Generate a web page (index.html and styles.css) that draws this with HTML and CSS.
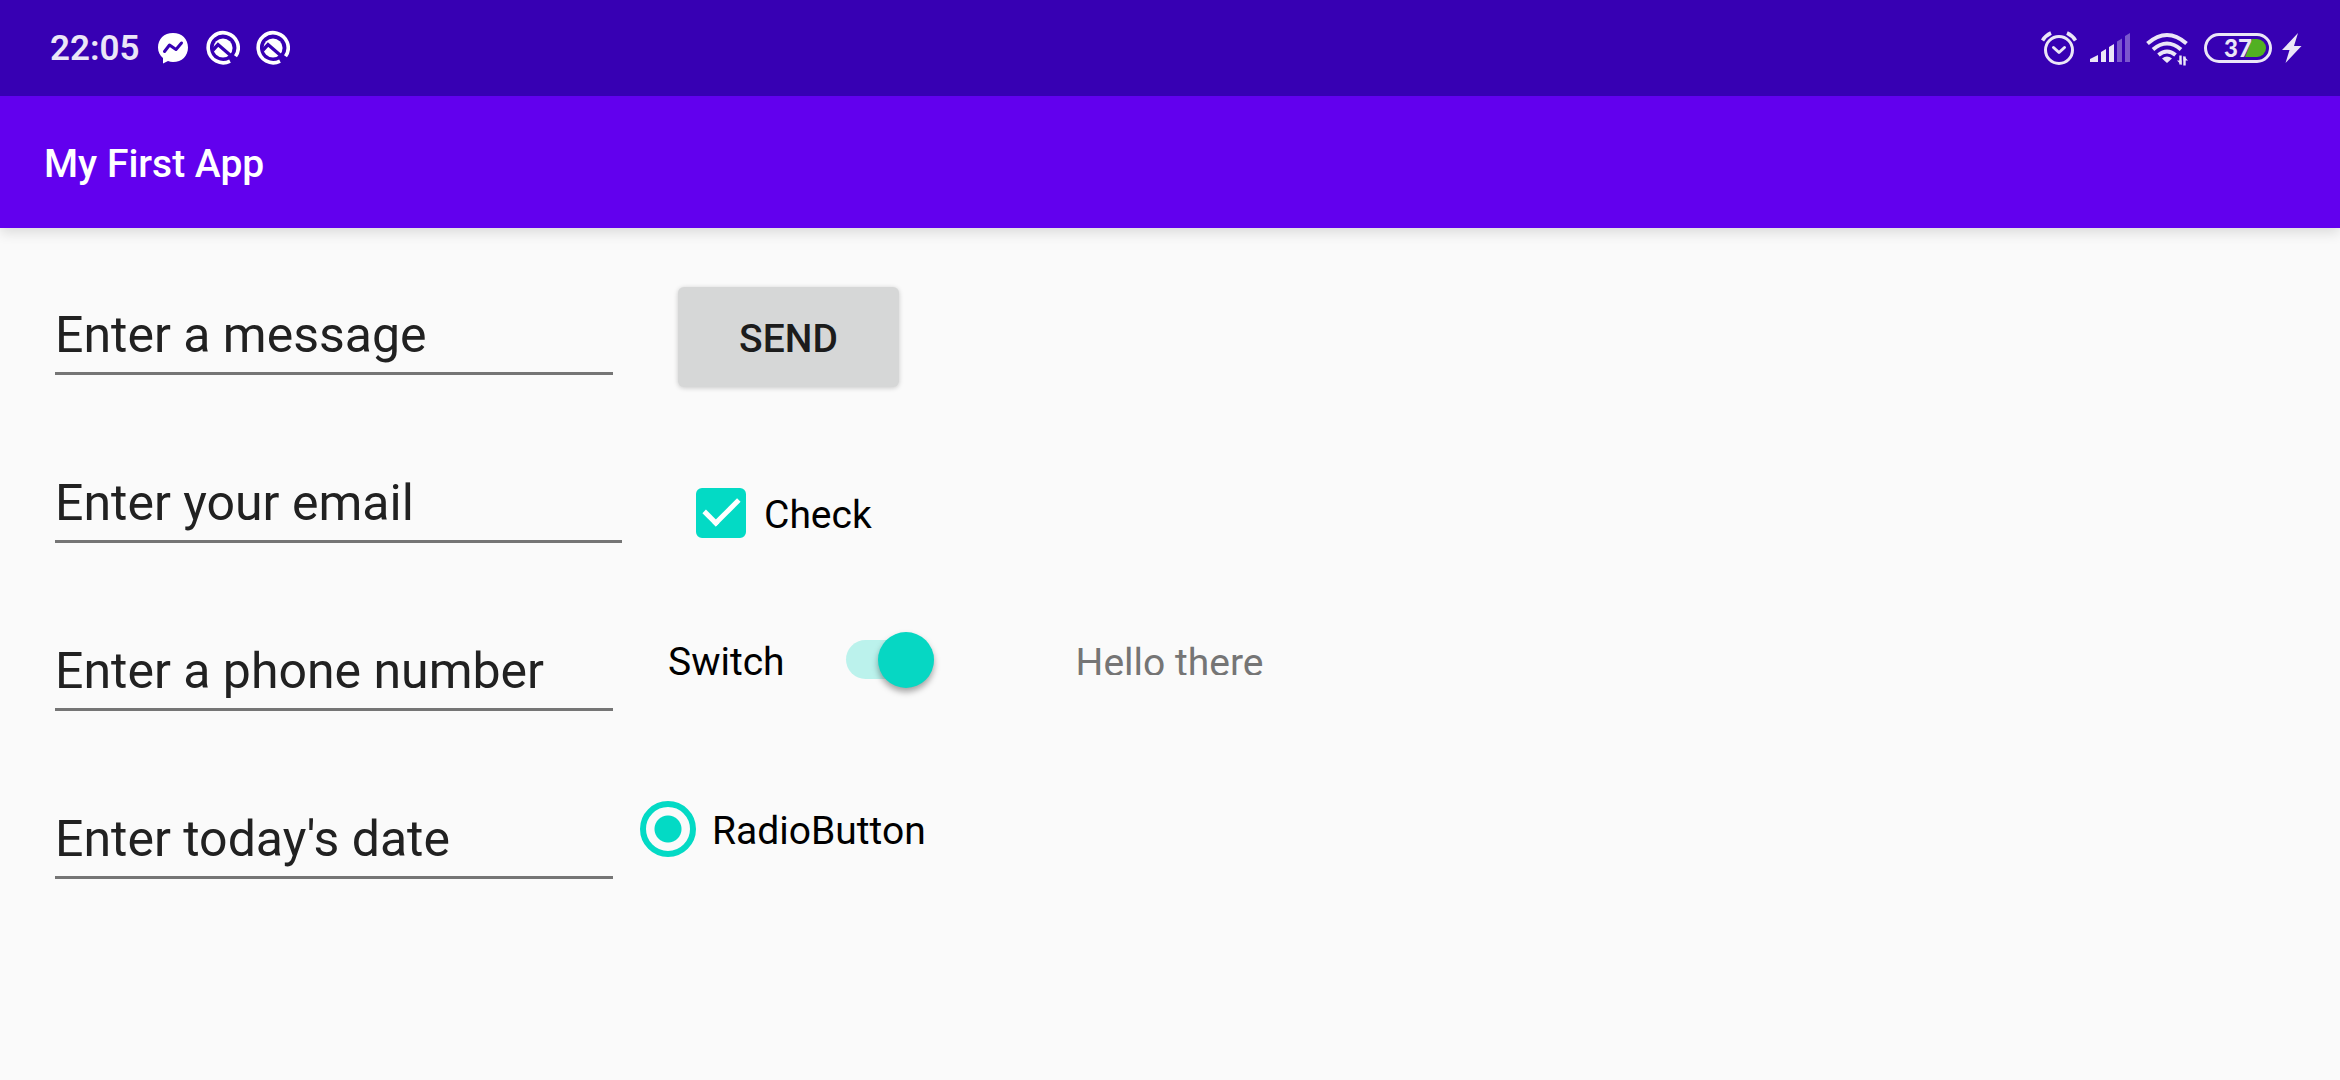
FILE: index.html
```html
<!DOCTYPE html>
<html lang="en">
<head>
<meta charset="utf-8">
<meta name="viewport" content="width=device-width, initial-scale=1">
<title>My First App</title>
<link rel="stylesheet" href="styles.css">
</head>
<body>
<div class="status-bar">
  <div class="status-left">
    <time class="clock">22:05</time>
    <svg class="icon" width="34" height="40" viewBox="0 0 34 40" aria-hidden="true">
      <path fill="#fff" d="M17 5C8 5 2 11 2 19.500c0 4.500 2 8 5 10.500v5.500l5-2.500c1.500.6 3.200 1 5 1 9 0 15-6 15-14.500S26 5 17 5z"/>
      <path d="M8.500 23.500l5-6.500 6.500 4.500 5.500-6.500" fill="none" stroke="#3700b3" stroke-width="3" stroke-linejoin="round" stroke-linecap="round"/>
    </svg>
    <svg class="icon" width="34" height="40" viewBox="0 0 34 40" aria-hidden="true">
      <path d="M24 33.100A15 15 0 1 1 29.500 28.300" fill="none" stroke="#fff" stroke-width="3.600"/>
      <circle cx="17" cy="20" r="9.600" fill="#fff"/>
      <path d="M7 22l5-5.500L31 33" fill="none" stroke="#3700b3" stroke-width="3.400"/>
    </svg>
    <svg class="icon" width="34" height="40" viewBox="0 0 34 40" aria-hidden="true">
      <path d="M24 33.100A15 15 0 1 1 29.500 28.300" fill="none" stroke="#fff" stroke-width="3.600"/>
      <circle cx="17" cy="20" r="9.600" fill="#fff"/>
      <path d="M7 22l5-5.500L31 33" fill="none" stroke="#3700b3" stroke-width="3.400"/>
    </svg>
  </div>
  <div class="status-right">
    <svg class="alarm" width="36" height="40" viewBox="0 0 36 40" fill="none" stroke="#ebe6f7" stroke-width="3" aria-hidden="true">
      <circle cx="18" cy="22" r="13.500"/>
      <path d="M12.500 19.500l5.500 5 5.500-5" stroke-linecap="round" stroke-linejoin="round"/>
      <path d="M1.500 12.500Q4.500 7.500 10 5M26 5Q31.500 7.500 34.500 12.500" stroke-width="3.600"/>
    </svg>
    <svg class="signal" width="40" height="40" viewBox="0 0 40 40" fill="#ebe6f7" aria-hidden="true">
      <path d="M0 34v-3l8-4v7zM11 34V24l5-3v13zM19 34V19l5-3v18z"/>
      <path d="M27 34V13.500l5-3V34zM35 34V8l5-3v29z" opacity=".38"/>
    </svg>
    <svg class="wifi" width="44" height="40" viewBox="0 0 44 40" fill="none" stroke="#ebe6f7" stroke-width="4" aria-hidden="true">
      <path d="M1.500 15.500Q21 -1.500 40.500 15.500M7 21.500Q21 9.500 35 21.500M12.500 27Q21 20 29.500 27"/>
      <path d="M21 35l-5-4.500q5-4 10 0z" fill="#ebe6f7" stroke="none"/>
      <path d="M34.500 27.500v9M38.500 28.500v9" stroke-width="2.400"/>
      <path d="M31 32.500h4.500v4.500zM42 32.500h-4.500v-4.500z" fill="#ebe6f7" stroke="none"/>
    </svg>
    <svg class="battery" width="68" height="40" viewBox="0 0 68 40" role="img" aria-label="Battery 37 percent">
      <rect x="1.500" y="6.500" width="65" height="27" rx="13.500" fill="none" stroke="#ebe6f7" stroke-width="3"/>
      <path d="M48 11h5a9 9 0 0 1 0 18H41z" fill="#52b022"/>
      <text class="charge" x="34" y="29" text-anchor="middle">37</text>
    </svg>
    <svg class="bolt" width="20" height="40" viewBox="0 0 20 40" fill="#ebe6f7" aria-hidden="true">
      <path d="M16 5L0 22h7.500L3.500 35 19.500 18H12z"/>
    </svg>
  </div>
</div>
<header class="app-bar"><h1 class="app-title">My First App</h1></header>
<main class="content">
  <form class="fields" id="entry">
    <input class="field" type="text" aria-label="Message" value="Enter a message">
    <input class="field field-email" type="text" inputmode="email" aria-label="Email" value="Enter your email">
    <input class="field" type="tel" aria-label="Phone number" value="Enter a phone number">
    <input class="field" type="text" aria-label="Date" value="Enter today's date">
  </form>
  <div class="controls">
    <button class="send" type="submit" form="entry">SEND</button>
    <label class="option check-option">
      <input class="check" type="checkbox" checked>
      <span class="option-text">Check</span>
    </label>
    <div class="switch-row">
      <label class="option switch-option">
        <span class="option-text">Switch</span>
        <input class="switch" type="checkbox" role="switch" checked>
      </label>
      <span class="greeting">Hello there</span>
    </div>
    <label class="option radio-option">
      <input class="radio" type="radio" name="choice" checked>
      <span class="option-text">RadioButton</span>
    </label>
  </div>
</main>
</body>
</html>
```
FILE: styles.css
```css
:root {
  --primary: #6200ee;
  --primary-dark: #3700b3;
  --accent: #03dac5;
  --surface: #fafafa;
}

*,
*::before,
*::after { box-sizing: border-box; }

body {
  margin: 0;
  min-height: 100vh;
  background: var(--surface);
  color: #000;
  font-family: Roboto, "Liberation Sans", sans-serif;
  font-size: 39px;
  line-height: 46px;
}

.status-bar {
  position: relative;
  display: flex;
  align-items: center;
  justify-content: space-between;
  height: 96px;
  padding: 0 38px 0 50px;
  background: var(--primary-dark);
}

.status-left {
  display: flex;
  align-items: center;
  gap: 16px;
}

.status-right {
  display: flex;
  align-items: center;
}

.clock {
  padding-top: 2px;
  color: #ebe6f7;
  font-size: 35px;
  font-weight: 600;
  line-height: 40px;
}

.signal { margin-left: 13px; }
.wifi { margin-left: 16px; }
.battery { margin-left: 14px; }
.bolt { margin-left: 10px; }

.charge {
  fill: #ebe6f7;
  font-family: Lato, sans-serif;
  font-size: 24px;
  font-weight: 900;
}

.app-bar {
  display: flex;
  align-items: center;
  height: 132px;
  padding: 4px 44px 0;
  background: var(--primary);
  box-shadow: 0 5px 12px rgba(0, 0, 0, .12);
}

.app-title {
  margin: 0;
  color: #fff;
  font-size: 39px;
  font-weight: 500;
}

.content {
  display: flex;
  align-items: flex-start;
  gap: 18px;
  padding: 59px 55px;
}

.fields {
  display: flex;
  flex-direction: column;
  gap: 80px;
  width: 567px;
}

.field {
  width: 558px;
  height: 88px;
  margin: 0;
  padding: 18px 0 7px;
  border: 0;
  border-bottom: 3px solid #757575;
  border-radius: 0;
  outline: 0;
  background: none;
  color: #212121;
  font: 400 50px/60px Roboto, "Liberation Sans", sans-serif;
}

.field-email { width: 100%; }

.controls {
  display: flex;
  flex-direction: column;
  align-items: flex-start;
}

.send {
  width: 221px;
  height: 100px;
  margin: 0 0 0 38px;
  padding: 4px 0 0;
  border: 0;
  border-radius: 6px;
  background: #d6d7d7;
  box-shadow: 0 1px 5px rgba(0, 0, 0, .2);
  color: #1c1c1c;
  font: 500 39px/46px Roboto, "Liberation Sans", sans-serif;
}

.option {
  display: flex;
  align-items: center;
}

.option-text { padding-top: 4px; }

.check-option {
  gap: 18px;
  margin: 101px 0 0 56px;
}

.check,
.switch,
.radio {
  appearance: none;
  flex: none;
  margin: 0;
}

.check {
  position: relative;
  width: 50px;
  height: 50px;
  border: 5px solid var(--accent);
  border-radius: 6px;
}

.check:checked { background: var(--accent); }

.check:checked::after {
  content: "";
  position: absolute;
  left: 3px;
  top: 5px;
  width: 35px;
  height: 19px;
  border: solid #fff;
  border-width: 0 0 5px 5px;
  transform: rotate(-45deg);
}

.switch-row {
  display: flex;
  align-items: flex-start;
  gap: 142px;
  margin: 94px 0 0 28px;
}

.switch-option { gap: 61px; }

.switch {
  position: relative;
  width: 88px;
  height: 56px;
}

.switch::before {
  content: "";
  position: absolute;
  inset: 8px 0 9px 0;
  border-radius: 20px;
  background: #bbf2ec;
}

.switch::after {
  content: "";
  position: absolute;
  right: 0;
  top: 0;
  width: 56px;
  height: 56px;
  border-radius: 50%;
  background: #06d7c3;
  box-shadow: 0 4px 6px rgba(0, 0, 0, .35);
}

.greeting {
  height: 35px;
  margin-top: 8px;
  overflow: hidden;
  color: #757575;
}

.radio-option {
  gap: 16px;
  margin-top: 113px;
}

.radio {
  width: 56px;
  height: 56px;
  border: 6px solid var(--accent);
  border-radius: 50%;
}

.radio:checked {
  background: radial-gradient(circle, var(--accent) 13px, transparent 14px);
}
```
